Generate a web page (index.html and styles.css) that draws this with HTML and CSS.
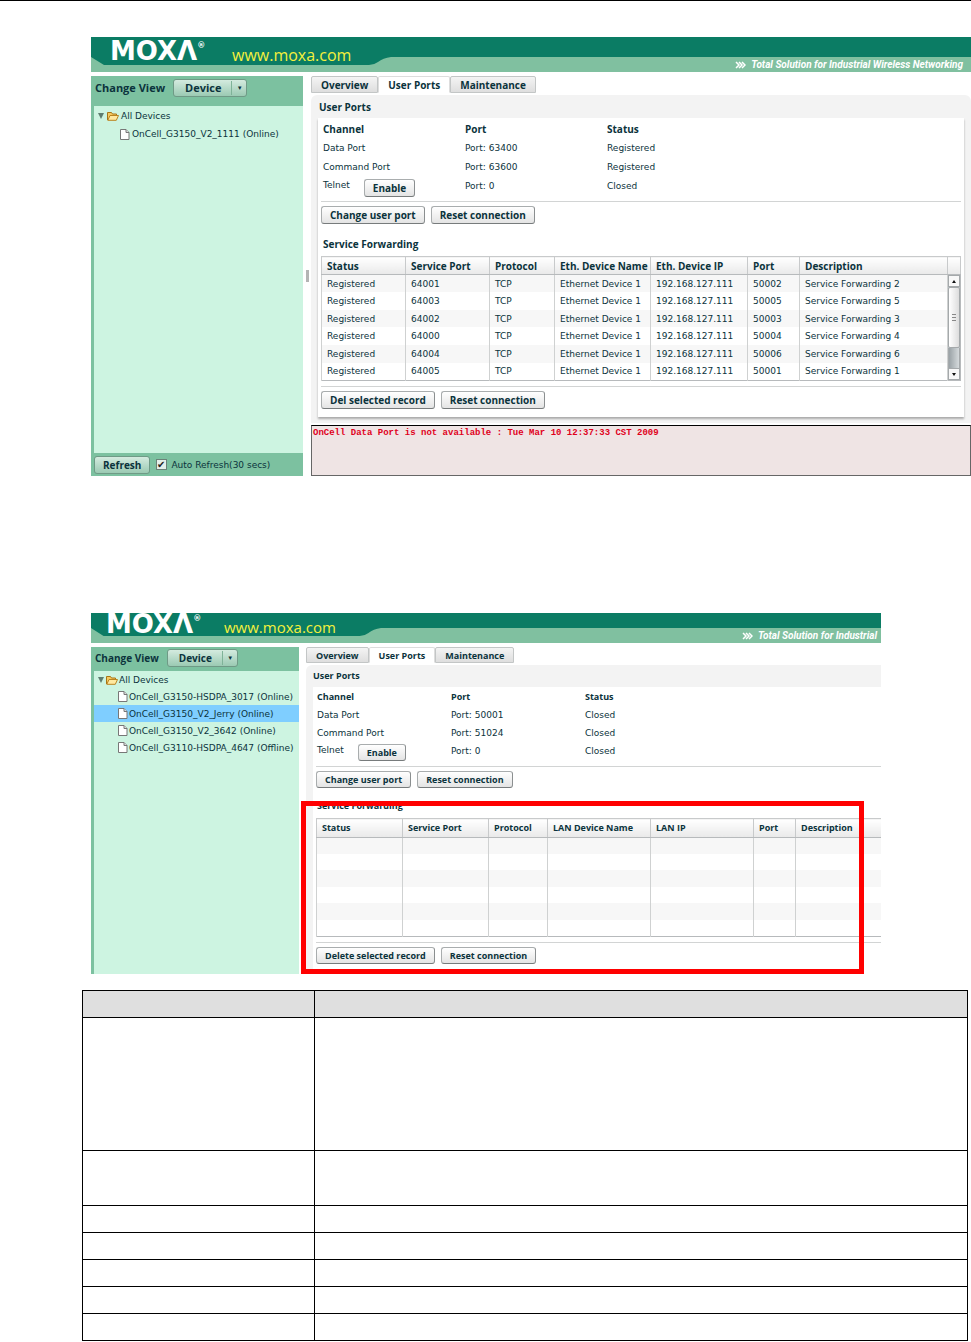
FILE: index.html
```html
<!DOCTYPE html>
<html lang="en">
<head>
    <meta charset="UTF-8">
    <meta name="viewport" content="width=device-width, initial-scale=1.0">
    <title>User Ports</title>
    <link rel="stylesheet" href="styles.css">
</head>
<body>
    <svg class="defs" width="0" height="0">
        <symbol id="folder" viewBox="0 0 12 10">
            <path d="M.5 9V1.5h4l1 1.5h4v1.5" fill="#f5c95f" stroke="#a87414"/>
            <path d="M.8 9.3 3 4.5h8.5L9.3 9.3z" fill="#ffe9a0" stroke="#b98420"/>
        </symbol>
        <symbol id="file" viewBox="0 0 10 11">
            <path d="M.5.5h5.5l3 3v7H.5z" fill="#fff" stroke="#777"/>
            <path d="M6 .5v3h3" fill="#ddd" stroke="#777"/>
        </symbol>
        <symbol id="arrows" viewBox="0 0 11 8">
            <path d="M1 1l3 3-3 3M4 1l3 3-3 3M7 1l3 3-3 3" fill="none" stroke="#fff" stroke-width="1.5"/>
        </symbol>
        <symbol id="swoosh" viewBox="0 0 300 8" preserveAspectRatio="none">
            <path d="M0 0h300q-8 1-13 5-4 3-9 3H13z" fill="#0b7c64"/>
        </symbol>
    </svg>

    <main class="page">
        <section class="figure">
            <div class="app">
                <header class="banner">
                    <div class="brand">
                        <span class="logo">MOXΛ<sup>®</sup></span>
                        <a class="site" href="#">www.moxa.com</a>
                    </div>
                    <div class="tagline">
                        <svg class="swoosh"><use href="#swoosh"/></svg>
                        <svg class="arrows"><use href="#arrows"/></svg>
                        <em>Total Solution for Industrial Wireless Networking</em>
                    </div>
                </header>
                <div class="body">
                    <aside class="side">
                        <div class="view">
                            <label for="view1">Change View</label>
                            <span class="select"><select id="view1"><option>Device</option></select></span>
                        </div>
                        <ul class="tree">
                            <li class="root"><i class="open"></i><svg class="folder"><use href="#folder"/></svg>All Devices</li>
                            <li><svg class="file"><use href="#file"/></svg>OnCell_G3150_V2_1111 (Online)</li>
                        </ul>
                        <div class="refresh">
                            <button type="button" class="btn green">Refresh</button>
                            <input type="checkbox" id="auto" checked>
                            <label for="auto">Auto Refresh(30 secs)</label>
                        </div>
                    </aside>
                    <div class="splitter"></div>
                    <div class="content">
                        <nav class="tabs">
                            <button type="button">Overview</button>
                            <button type="button" class="active">User Ports</button>
                            <button type="button">Maintenance</button>
                        </nav>
                        <div class="panel">
                            <h2>User Ports</h2>
                            <div class="card">
                                <table class="ports">
                                    <tr><th>Channel</th><th>Port</th><th>Status</th></tr>
                                    <tr><td>Data Port</td><td>Port: 63400</td><td>Registered</td></tr>
                                    <tr><td>Command Port</td><td>Port: 63600</td><td>Registered</td></tr>
                                    <tr><td><div class="telnet">Telnet <button type="button" class="btn">Enable</button></div></td><td>Port: 0</td><td>Closed</td></tr>
                                </table>
                                <div class="actions">
                                    <button type="button" class="btn">Change user port</button>
                                    <button type="button" class="btn">Reset connection</button>
                                </div>
                                <h3>Service Forwarding</h3>
                                <table class="grid">
                                    <colgroup><col class="c1"><col class="c2"><col class="c3"><col class="c4"><col class="c5"><col class="c6"><col><col class="c8"></colgroup>
                                    <tr><th>Status</th><th>Service Port</th><th>Protocol</th><th>Eth. Device Name</th><th>Eth. Device IP</th><th>Port</th><th>Description</th><th></th></tr>
                                    <tr>
                                        <td>Registered</td><td>64001</td><td>TCP</td><td>Ethernet Device 1</td><td>192.168.127.111</td><td>50002</td><td>Service Forwarding 2</td>
                                        <td class="scroll" rowspan="6"><div class="bar"><i class="up"></i><i class="thumb"></i><i class="track"></i><i class="down"></i></div></td>
                                    </tr>
                                    <tr><td>Registered</td><td>64003</td><td>TCP</td><td>Ethernet Device 1</td><td>192.168.127.111</td><td>50005</td><td>Service Forwarding 5</td></tr>
                                    <tr><td>Registered</td><td>64002</td><td>TCP</td><td>Ethernet Device 1</td><td>192.168.127.111</td><td>50003</td><td>Service Forwarding 3</td></tr>
                                    <tr><td>Registered</td><td>64000</td><td>TCP</td><td>Ethernet Device 1</td><td>192.168.127.111</td><td>50004</td><td>Service Forwarding 4</td></tr>
                                    <tr><td>Registered</td><td>64004</td><td>TCP</td><td>Ethernet Device 1</td><td>192.168.127.111</td><td>50006</td><td>Service Forwarding 6</td></tr>
                                    <tr><td>Registered</td><td>64005</td><td>TCP</td><td>Ethernet Device 1</td><td>192.168.127.111</td><td>50001</td><td>Service Forwarding 1</td></tr>
                                </table>
                                <div class="actions bottom">
                                    <button type="button" class="btn">Del selected record</button>
                                    <button type="button" class="btn">Reset connection</button>
                                </div>
                            </div>
                        </div>
                        <div class="log">OnCell Data Port is not available : Tue Mar 10 12:37:33 CST 2009</div>
                    </div>
                </div>
            </div>
        </section>

        <section class="figure second">
            <div class="app">
                <header class="banner">
                    <div class="brand">
                        <span class="logo">MOXΛ<sup>®</sup></span>
                        <a class="site" href="#">www.moxa.com</a>
                    </div>
                    <div class="tagline">
                        <svg class="swoosh"><use href="#swoosh"/></svg>
                        <svg class="arrows"><use href="#arrows"/></svg>
                        <em>Total Solution for Industrial</em>
                    </div>
                </header>
                <div class="body">
                    <aside class="side">
                        <div class="view">
                            <label for="view2">Change View</label>
                            <span class="select"><select id="view2"><option>Device</option></select></span>
                        </div>
                        <ul class="tree">
                            <li class="root"><i class="open"></i><svg class="folder"><use href="#folder"/></svg>All Devices</li>
                            <li><svg class="file"><use href="#file"/></svg>OnCell_G3150-HSDPA_3017 (Online)</li>
                            <li class="selected"><svg class="file"><use href="#file"/></svg>OnCell_G3150_V2_Jerry (Online)</li>
                            <li><svg class="file"><use href="#file"/></svg>OnCell_G3150_V2_3642 (Online)</li>
                            <li><svg class="file"><use href="#file"/></svg>OnCell_G3110-HSDPA_4647 (Offline)</li>
                        </ul>
                    </aside>
                    <div class="splitter"></div>
                    <div class="content">
                        <nav class="tabs">
                            <button type="button">Overview</button>
                            <button type="button" class="active">User Ports</button>
                            <button type="button">Maintenance</button>
                        </nav>
                        <div class="panel">
                            <h2>User Ports</h2>
                            <div class="card">
                                <table class="ports">
                                    <tr><th>Channel</th><th>Port</th><th>Status</th></tr>
                                    <tr><td>Data Port</td><td>Port: 50001</td><td>Closed</td></tr>
                                    <tr><td>Command Port</td><td>Port: 51024</td><td>Closed</td></tr>
                                    <tr><td><div class="telnet">Telnet <button type="button" class="btn">Enable</button></div></td><td>Port: 0</td><td>Closed</td></tr>
                                </table>
                                <div class="actions">
                                    <button type="button" class="btn">Change user port</button>
                                    <button type="button" class="btn">Reset connection</button>
                                </div>
                                <h3>Service Forwarding</h3>
                                <table class="grid">
                                    <colgroup><col class="c1"><col class="c2"><col class="c3"><col class="c4"><col class="c5"><col class="c6"><col></colgroup>
                                    <tr><th>Status</th><th>Service Port</th><th>Protocol</th><th>LAN Device Name</th><th>LAN IP</th><th>Port</th><th>Description</th></tr>
                                    <tr><td></td><td></td><td></td><td></td><td></td><td></td><td></td></tr>
                                    <tr><td></td><td></td><td></td><td></td><td></td><td></td><td></td></tr>
                                    <tr><td></td><td></td><td></td><td></td><td></td><td></td><td></td></tr>
                                    <tr><td></td><td></td><td></td><td></td><td></td><td></td><td></td></tr>
                                    <tr><td></td><td></td><td></td><td></td><td></td><td></td><td></td></tr>
                                    <tr><td></td><td></td><td></td><td></td><td></td><td></td><td></td></tr>
                                </table>
                                <div class="actions bottom">
                                    <button type="button" class="btn">Delete selected record</button>
                                    <button type="button" class="btn">Reset connection</button>
                                </div>
                            </div>
                        </div>
                    </div>
                </div>
            </div>
            <div class="highlight"></div>
        </section>

        <table class="notes">
            <tr><th></th><th></th></tr>
            <tr class="tall"><td></td><td></td></tr>
            <tr class="medium"><td></td><td></td></tr>
            <tr><td></td><td></td></tr>
            <tr><td></td><td></td></tr>
            <tr><td></td><td></td></tr>
            <tr><td></td><td></td></tr>
            <tr><td></td><td></td></tr>
        </table>
    </main>
</body>
</html>
```
FILE: styles.css
```css
*{
    box-sizing: border-box;
}
body{
    margin: 0;
    background: #fff;
    color: #0b333c;
    font-family: 'DejaVu Sans', sans-serif;
    font-size: 9px;
    line-height: 12px;
}
table{
    border-collapse: collapse;
    border-spacing: 0;
}
th, td{
    padding: 0;
    text-align: left;
    font-weight: normal;
}
button, select{
    margin: 0;
    color: #0b333c;
}
.defs{
    position: absolute;
}
.page{
    border-top: 1px solid #000;
    padding: 36px 0 0 91px;
}
.figure{
    --pitch: 19px;
    --side: 212px;
    --btn: 18px;
    --bold: 10px;
    --c1: 84px;
    --c2: 84px;
    --c3: 65px;
    --c4: 96px;
    --c5: 97px;
    --c6: 52px;
    position: relative;
}
.second{
    --pitch: 18px;
    --side: 208px;
    --btn: 17px;
    --bold: 9px;
    --c1: 86px;
    --c2: 86px;
    --c3: 59px;
    --c4: 103px;
    --c5: 103px;
    --c6: 42px;
    margin: 137px 90px 0 0;
}

/* banner */
.brand{
    display: flex;
    height: 20px;
    padding-left: 19px;
    background: #0b7c64;
    color: #fff;
}
.logo{
    position: relative;
    z-index: 1;
    width: 122px;
    font-weight: bold;
    font-size: 26px;
    line-height: 28px;
    white-space: nowrap;
}
.logo sup{
    font-size: 8px;
    line-height: 8px;
    vertical-align: 12px;
}
.site{
    position: relative;
    z-index: 1;
    font-family: 'Open Sans', sans-serif;
    font-size: 16px;
    line-height: 36px;
    color: #f4f03c;
    text-decoration: none;
}
.tagline{
    position: relative;
    display: flex;
    align-items: center;
    justify-content: flex-end;
    gap: 5px;
    height: 15px;
    padding-right: 8px;
    background: #80c0a0;
    color: #fff;
    font-family: 'Roboto', sans-serif;
    font-weight: bold;
    font-size: 10px;
}
.swoosh{
    position: absolute;
    left: 0;
    top: 0;
    width: 300px;
    height: 8px;
}
.arrows{
    width: 11px;
    height: 8px;
}
.second .brand{
    height: 15px;
    padding-left: 15px;
}
.second .logo{
    width: 118px;
    line-height: 22px;
}
.second .site{
    font-size: 15px;
    line-height: 29px;
}
.second .tagline{
    height: 15px;
    padding-right: 4px;
}
.second .swoosh{
    width: 290px;
}

/* left side */
.body{
    display: flex;
    margin-top: 4px;
}
.side{
    display: flex;
    flex-direction: column;
    width: var(--side);
    padding-left: 3px;
    background: #7cc1a0;
}
.view{
    display: flex;
    align-items: center;
    gap: 8px;
    height: 30px;
    padding: 0 0 7px 1px;
    font-family: 'Open Sans', sans-serif;
    font-weight: bold;
    font-size: 11px;
}
.select{
    position: relative;
    height: 18px;
}
.select select{
    appearance: none;
    width: 74px;
    height: 18px;
    padding: 0 0 0 11px;
    border: 1px solid #6f9a86;
    border-radius: 3px;
    background: linear-gradient(#d4ebdf, #9bcab3);
    font: bold 11px 'Open Sans', sans-serif;
}
.select::after{
    content: "▼";
    position: absolute;
    right: 0;
    top: 2px;
    width: 15px;
    height: 14px;
    border-left: 1px solid #7fb398;
    font-size: 6px;
    line-height: 14px;
    text-align: center;
    pointer-events: none;
}
.tree{
    flex: 1;
    margin: 0;
    padding: 1px 0 0;
    list-style: none;
    background: #cdf4e1;
}
.tree li{
    display: flex;
    align-items: center;
    gap: 2px;
    height: 18px;
    padding-left: 26px;
    white-space: nowrap;
}
.tree .root{
    padding-left: 4px;
}
.tree .selected{
    background: #7fceff;
}
.open{
    margin-right: 1px;
    border: 3px solid transparent;
    border-top: 6px solid #5e7d70;
    border-bottom: 0;
}
.folder{
    width: 12px;
    height: 10px;
}
.file{
    width: 10px;
    height: 11px;
}
.refresh{
    display: flex;
    align-items: center;
    height: 23px;
}
.refresh input{
    appearance: none;
    width: 11px;
    height: 11px;
    margin: 0 4px 0 6px;
    border: 1px solid #6b8278;
    background: #e4efe9;
}
.refresh input:checked::after{
    content: "✔";
    display: block;
    font-size: 10px;
    line-height: 9px;
    color: #222;
}
.second .view{
    height: 24px;
    padding-bottom: 2px;
    font-size: 10px;
}
.second .select select{
    width: 71px;
    font-size: 10px;
}
.second .tree{
    padding-top: 0;
}
.second .tree li{
    gap: 1px;
    height: 17px;
    padding-left: 24px;
}
.second .tree .root{
    padding-left: 4px;
}
.splitter{
    display: flex;
    align-items: center;
    justify-content: center;
    width: 8px;
}
.splitter::before{
    content: "";
    width: 3px;
    height: 12px;
    background: #b4b4b4;
}
.second .splitter{
    width: 7px;
}
.second .splitter::before{
    display: none;
}

/* buttons and tabs */
.btn, .tabs button{
    height: var(--btn);
    border: 1px solid #a9adae;
    border-bottom-color: #777b7c;
    border-right-color: #8b8f90;
    border-radius: 3px;
    background: linear-gradient(#fff, #e4e4e4);
    font: bold var(--bold) 'Open Sans', sans-serif;
    white-space: nowrap;
}
.btn{
    padding: 0 8px;
}
.btn.green{
    background: linear-gradient(#d4ebdf, #9bcab3);
    border-color: #6f9a86;
}
.tabs{
    display: flex;
}
.tabs button{
    height: 17px;
    padding: 0 9px;
    border-color: #c3c6c6;
    border-radius: 2px 2px 0 0;
    background: linear-gradient(#f4f4f4, #dedede);
}
.tabs .active{
    border-color: #ddd;
    border-bottom-color: #fff;
    background: #fff;
}
.second .tabs button{
    height: 16px;
}

/* right side */
.content{
    flex: 1;
    min-width: 0;
}
.panel{
    margin-top: 2px;
    padding: 0 7px 6px;
    border-radius: 6px 6px 0 0;
    background: #f3f3f3;
}
h2, h3, .ports th, .grid th{
    font: bold var(--bold)/12px 'Open Sans', sans-serif;
}
h2{
    margin: 0;
    padding: 6px 0 5px 1px;
}
.card{
    padding: 1px 3px 8px;
    background: #fff;
    box-shadow: 0 2px 2px #aaa;
}
.ports{
    table-layout: fixed;
    width: 425px;
    margin-left: 2px;
}
.ports tr{
    height: var(--pitch);
}
.ports td, .ports th{
    width: 142px;
    white-space: nowrap;
}
.telnet{
    display: flex;
    gap: 14px;
    height: 14px;
}
.actions{
    display: flex;
    gap: 6px;
    margin-top: 6px;
    padding-top: 4px;
    border-top: 1px solid #d2d4d4;
}
.bottom{
    margin-top: 5px;
}
h3{
    margin: 14px 0 6px 2px;
}
.grid{
    table-layout: fixed;
    width: 100%;
    height: 125px;
    border: 1px solid #b7babc;
}
.c1{ width: var(--c1); }
.c2{ width: var(--c2); }
.c3{ width: var(--c3); }
.c4{ width: var(--c4); }
.c5{ width: var(--c5); }
.c6{ width: var(--c6); }
.c8{ width: 13px; }
.grid th{
    height: 18px;
    border: 1px solid #c8cacb;
    border-bottom-color: #b7babc;
    background: linear-gradient(#fff, #e9e9e9);
}
.grid td{
    height: 16px;
    border-left: 1px solid #cfd1d1;
}
.grid th, .grid td{
    padding-left: 5px;
    white-space: nowrap;
}
.grid tr:nth-child(even){
    background: #f7f7f7;
}
.grid .scroll{
    height: 100px;
    padding: 0;
}
.bar{
    display: flex;
    flex-direction: column;
    height: 105px;
    background: #b9c0c4;
}
.bar i{
    display: flex;
    align-items: center;
    justify-content: center;
    border: 1px solid #a5a9ab;
    background: #f8f8f8;
}
.bar .up, .bar .down{
    height: 12px;
}
.bar .up::before, .bar .down::before{
    content: "";
    border: 2px solid transparent;
    border-top: 0;
    border-bottom: 3px solid #111;
}
.bar .down::before{
    border-bottom: 0;
    border-top: 3px solid #111;
}
.bar .thumb{
    height: 61px;
    border-radius: 2px;
    background: linear-gradient(90deg, #fff, #ddd);
}
.bar .thumb::before{
    content: "";
    width: 4px;
    height: 7px;
    background: repeating-linear-gradient(#888 0 1px, transparent 1px 3px);
}
.bar .track{
    flex: 1;
    border-width: 0 1px;
    background: linear-gradient(90deg, #9aa2a6, #d5dadc);
}
.log{
    height: 51px;
    margin-top: 2px;
    padding: 1px;
    border: 1px solid #666;
    border-top-color: #000;
    background: #efe4e4;
    color: #e0001b;
    font: bold 9px/13px 'Liberation Mono', monospace;
    white-space: nowrap;
}

/* the second window runs off the right edge */
.second .panel{
    margin-top: 2px;
    padding-right: 0;
    border-radius: 6px 0 0 0;
    padding-bottom: 0;
}
.second h2{
    padding: 5px 0;
}
.second .card{
    padding-right: 0;
    padding-bottom: 10px;
    box-shadow: none;
}
.second .ports{
    width: 402px;
    margin-left: 1px;
}
.second .ports td, .second .ports th{
    width: 134px;
}
.second h3{
    margin: 12px 0 6px 1px;
}
.second .grid{
    height: 119px;
    border-right: 0;
}
.second .grid th{
    border-right: 0;
}
.highlight{
    position: absolute;
    left: 210px;
    right: 17px;
    top: 188px;
    bottom: 0;
    border: 5px solid #f00;
}

/* table under the windows */
.notes{
    table-layout: fixed;
    width: calc(100% + 6px);
    margin: 16px 0 0 -9px;
}
.notes tr{
    height: 27px;
}
.notes .tall{
    height: 133px;
}
.notes .medium{
    height: 55px;
}
.notes th, .notes td{
    border: 1px solid #000;
}
.notes th{
    background: #dfdfdf;
}
.notes th:first-child{
    width: 232px;
}
```
